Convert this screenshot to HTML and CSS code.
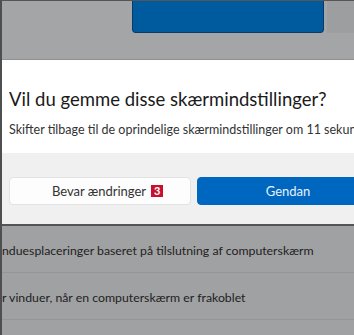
FILE: index.html
```html
<!DOCTYPE html>
<html lang="da">
<head>
  <meta charset="UTF-8" />
  <meta name="viewport" content="width=device-width, initial-scale=1.0" />
  <title>Skærmindstillinger</title>
  <link rel="stylesheet" href="styles.css">
</head>
<body>
  <div class="screen">
    <div class="top">
      <div class="top-gap"></div>
      <div class="top-btn"></div>
      <div class="top-side"></div>
    </div>

    <div class="dialog">
      <div class="dialog-body">
        <h1>Vil du gemme disse skærmindstillinger?</h1>
        <p>Skifter tilbage til de oprindelige skærmindstillinger om 11 sekunder.</p>
      </div>
      <div class="dialog-footer">
        <button class="btn">Bevar ændringer <span class="badge">3</span></button>
        <button class="btn primary">Gendan</button>
      </div>
    </div>

    <div class="list">
      <div class="row">nduesplaceringer baseret på tilslutning af computerskærm</div>
      <div class="row">r vinduer, når en computerskærm er frakoblet</div>
    </div>
  </div>
</body>
</html>
```

FILE: styles.css
```css
* {
  box-sizing: border-box;
}

html, body {
  margin: 0;
  height: 100%;
  overflow: hidden;
}

body {
  background: #a3a5a6;
  font-family: Lato, 'Noto Sans', sans-serif;
  color: #1b1b1b;
}

.screen {
  height: 100%;
  border-left: 2px solid #4e4f50;
  border-top: 1px solid #555;
  display: flex;
  flex-direction: column;
}

/* top strip with the blue settings button */
.top {
  height: 59px;
  display: flex;
  align-items: flex-start;
  border-bottom: 1px solid #8f9192;
}

.top-gap {
  width: 130px;
}

.top-btn {
  width: 192px;
  height: 32px;
  background: #005a9e;
  border: 1px solid #0c3a66;
  border-top: none;
  border-radius: 0 0 4px 4px;
}

.top-side {
  flex: 1;
  height: 32px;
  margin-left: 3px;
  background: #9d9e9f;
}

/* dialog */
.dialog {
  width: 390px;
  flex-shrink: 0;
  background: #fff;
  border-bottom: 2px solid #555;
}

.dialog-body {
  padding: 24px 7px 0;
  height: 93px;
  white-space: nowrap;
}

.dialog-body h1 {
  margin: 0;
  font-size: 18.5px;
  font-weight: 400;
  line-height: 30px;
  color: #1a1a1a;
}

.dialog-body p {
  margin: 8px 0 0;
  font-size: 12.5px;
  color: #333;
}

.dialog-footer {
  background: #f0f0f0;
  height: 71px;
  padding: 24px 7px 0;
  display: flex;
  gap: 6px;
}

.btn {
  width: 182px;
  height: 28px;
  font-family: inherit;
  font-size: 13px;
  border-radius: 4px;
  border: 1px solid #e3e3e3;
  background: #fdfdfd;
  color: #333;
  display: flex;
  align-items: center;
  justify-content: center;
  gap: 5px;
  padding: 0 0 0 15px;
}

.btn.primary {
  background: #0067c0;
  border-color: #0067c0;
  color: #e8f1fb;
  padding: 0;
}

.badge {
  background: #c8102e;
  color: #fff;
  font-weight: 700;
  font-size: 11px;
  line-height: 12px;
  width: 12px;
  text-align: center;
}

/* list below the dialog */
.list {
  flex: 1;
  background: #a0a1a2;
}

.row {
  height: 47px;
  padding-top: 2px;
  line-height: 45px;
  font-size: 12.3px;
  color: #222;
  border-bottom: 1px solid #949596;
  white-space: nowrap;
}
```
